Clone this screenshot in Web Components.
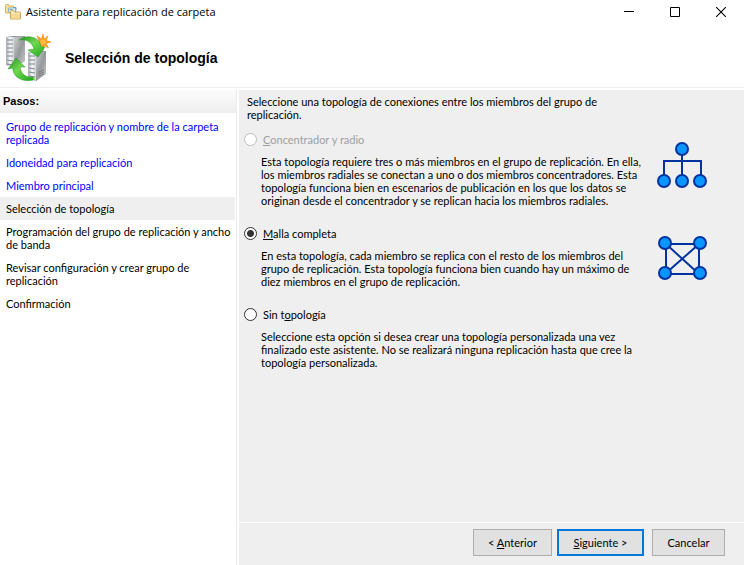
<!DOCTYPE html>
<html lang="es">
<head>
<meta charset="utf-8">
<title>Asistente para replicación de carpeta</title>
<style>
  html, body { height: 100%; }
  body { margin: 0; background: #fff; color: #000; font: 11px/13px Lato, "Liberation Sans", sans-serif; }
</style>
</head>
<body>
<wizard-window>
  <title-bar slot="title">Asistente para replicación de carpeta</title-bar>
  <wizard-header slot="header">Selección de topología</wizard-header>
  <step-list slot="steps" heading="Pasos:">
    <wizard-step state="done">Grupo de replicación y nombre de la carpeta replicada</wizard-step>
    <wizard-step state="done">Idoneidad para replicación</wizard-step>
    <wizard-step state="done">Miembro principal</wizard-step>
    <wizard-step state="current">Selección de topología</wizard-step>
    <wizard-step>Programación del grupo de replicación y ancho de banda</wizard-step>
    <wizard-step>Revisar configuración y crear grupo de replicación</wizard-step>
    <wizard-step>Confirmación</wizard-step>
  </step-list>
  <topology-form></topology-form>
  <wizard-footer slot="footer"></wizard-footer>
</wizard-window>

<script>
const define = (name, html, setup) => customElements.define(name, class extends HTMLElement {
  constructor() {
    super();
    this.attachShadow({ mode: 'open' });
  }
  connectedCallback() {
    this.shadowRoot.innerHTML = '<style>:host,*{box-sizing:border-box}</style>' + html;
    if (setup) setup(this, this.shadowRoot);
  }
});

define('wizard-window', `
<style>
  :host { display: grid; grid-template: auto auto 1fr auto / 239px 1fr; min-height: 100vh; }
  .title, .header { grid-column: 1 / -1; }
  .header { border-bottom: 1px solid #efefef; margin-bottom: 2px; }
  .steps { grid-row: 3 / 5; grid-column: 1; border-right: 1px solid #ebebeb; margin-right: 2px; }
  main { background: #efefef; }
  footer { background: #efefef; border-top: 1px solid #fff; }
</style>
<div class="title"><slot name="title"></slot></div>
<header class="header"><slot name="header"></slot></header>
<nav class="steps"><slot name="steps"></slot></nav>
<main><slot></slot></main>
<footer><slot name="footer"></slot></footer>`);

define('title-bar', `
<style>
  :host { display: flex; align-items: center; height: 24px; padding-left: 5px; font: 11px/16px "Open Sans", sans-serif; }
  .name { flex: 1; padding-left: 5px; white-space: nowrap; }
  button { width: 46px; height: 24px; padding: 0; border: 0; background: none; display: grid; place-items: center; }
  svg { display: block; }
</style>
<svg width="16" height="16" viewBox="0 0 16 16" aria-hidden="true">
  <path d="M.5 9V1.500q0-1 1-1h2l1 1.500h4v7z" fill="#f6df9c" stroke="#d5b264"/>
  <path d="M3.500 8V4h7v4z" fill="#e4f3f8" stroke="#8fb9c9"/>
  <path d="M4.500 5.500h3M8 3.500h3v3" fill="none" stroke="#6aa5bd"/>
  <path d="M5.500 15V7.500q0-1 1-1h2l1 1.500h5q1 0 1 1v6z" fill="#fae7b2" stroke="#cfa853"/>
  <path d="M6 10h9v4.500H6z" fill="#f5d993"/>
</svg>
<span class="name"><slot></slot></span>
<button aria-label="Minimizar"><svg width="10" height="10"><path d="M0 4.500h10" stroke="#000"/></svg></button>
<button aria-label="Maximizar"><svg width="10" height="10"><path d="M.5 .5h9v9h-9z" fill="none" stroke="#000"/></svg></button>
<button aria-label="Cerrar"><svg width="10" height="10"><path d="M0 0l10 10M10 0L0 10" stroke="#000" stroke-width="1.100"/></svg></button>`);

define('wizard-header', `
<style>
  :host { display: flex; align-items: center; gap: 13px; height: 63px; padding: 4px 4px 0; }
  h1 { margin: 0; font: bold 14px/18px "Liberation Sans", Arial, sans-serif; }
  svg { display: block; flex: none; }
</style>
<svg width="48" height="48" viewBox="0 0 48 48" aria-hidden="true">
  <defs>
    <linearGradient id="side" x1="0" y1="0" x2="1" y2="1"><stop offset="0" stop-color="#cfd1d2"/><stop offset=".5" stop-color="#96999b"/><stop offset="1" stop-color="#c9cbcc"/></linearGradient>
    <linearGradient id="front" x1="0" x2="1"><stop offset="0" stop-color="#a4abb0"/><stop offset=".5" stop-color="#f6f7f9"/><stop offset="1" stop-color="#d2d6d8"/></linearGradient>
    <linearGradient id="green" x1="0" y1="0" x2="1" y2="1"><stop offset="0" stop-color="#238c22"/><stop offset=".45" stop-color="#6fd94f"/><stop offset="1" stop-color="#21a51d"/></linearGradient>
  </defs>
  <path d="M2 3l7-1h12v25l-11 6-8-2z" fill="#8b9195"/>
  <path d="M2 3h8v30l-8-2z" fill="url(#front)"/><path d="M10 3l11-1v25l-11 6z" fill="url(#side)"/>
  <path d="M3 6h6M3 10h6M3 14h6M3 18h6M3 22h6M3 26l6 1M3 30l6 1" stroke="#7b858e"/>
  <path d="M24 19l8-2h10v22l-10 8-8-2z" fill="#8b9195"/>
  <path d="M24 18l8 1v28l-8-2z" fill="url(#front)"/><path d="M32 19l10-2v23l-10 7z" fill="url(#side)"/>
  <path d="M25 22h6M25 26h6M25 30h6M25 34l6 1M25 38l6 1M25 42l6 1" stroke="#7b858e"/>
  <path d="M35 38l5-2M35 40l5-2M35 42l5-2" stroke="#777c7f"/>
  <circle cx="30" cy="45" r="1.200" fill="#80e33b"/>
  <path d="M39 0l1 5 4-3-2 4.500 5 1.500-5 1.500 2.500 4.500-4.500-2.500-1 5-1.500-5L33 14l2-4.500L30 8l5-1.500L33 2l4.500 3z" fill="#ffa21d" stroke="#f0860a" stroke-width=".6"/>
  <circle cx="39" cy="8" r="2.600" fill="#ffbd45"/>
  <path d="M15 6C22 0 36 2 37 13h4l-7 10-10-7 6-1C28 8 22 5 15 6z" fill="url(#green)" stroke="#219a20" stroke-width=".5"/>
  <path d="M29 46C18 49 8 42 9 34l-5 1L12 24l9 9h-5c1 7 6 11 13 10z" fill="url(#green)" stroke="#219a20" stroke-width=".5"/>
</svg>
<h1><slot></slot></h1>`);

define('step-list', `
<style>
  :host { display: block; }
  h2 { margin: 0; padding: 5px 3px; height: 23px; font: bold 11px/13px "Liberation Sans", Arial, sans-serif; background: linear-gradient(#fcfcfc, #eeeeee); }
  div { padding-top: 2px; }
</style>
<h2></h2><div role="list"><slot></slot></div>`, (el, root) => {
  root.querySelector('h2').textContent = el.getAttribute('heading');
});

define('wizard-step', `
<style>
  :host { display: block; padding: 5px 2px 5px 6px; margin-right: 1px; }
  :host([state="current"]) { background: #efefef; }
  a { color: #00f; text-decoration: none; }
</style>
<slot></slot>`, (el, root) => {
  el.setAttribute('role', 'listitem');
  if (el.getAttribute('state') === 'done') {
    const link = document.createElement('a');
    link.href = '#';
    root.querySelector('slot').replaceWith(link);
    link.append(document.createElement('slot'));
  }
});

define('topology-form', `
<style>
  :host { display: block; padding: 5px 37px 20px 5px; }
  p { margin: 0; }
  .intro { padding-left: 3px; max-width: 370px; margin-bottom: 12px; }
  form { display: grid; gap: 20px; }
  .option { display: grid; grid-template: 13px auto / 13px minmax(0, 1fr) 50px; column-gap: 6px; row-gap: 9px; }
  input { appearance: none; width: 13px; height: 13px; margin: 0; border: 1px solid #333; border-radius: 50%; background: #fff; }
  input:checked { background: radial-gradient(circle, #333 3px, #fff 4px); }
  input:disabled { border-color: #bcbcbc; }
  input:disabled + label { color: #a0a0a0; }
  .about { grid-column: 1 / 3; grid-row: 2; padding-left: 17px; max-width: 400px; }
  svg { grid-column: 3; grid-row: 1 / 3; margin-top: 8px; margin-bottom: -20px; }
  svg { fill: #0a96ff; stroke: #0033a0; stroke-width: 2; }
</style>
<p class="intro">Seleccione una topología de conexiones entre los miembros del grupo de replicación.</p>
<form>
  <div class="option">
    <input type="radio" name="t" id="hub" disabled><label for="hub"><u>C</u>oncentrador y radio</label>
    <p class="about">Esta topología requiere tres o más miembros en el grupo de replicación. En ella, los miembros radiales se conectan a uno o dos miembros concentradores. Esta topología funciona bien en escenarios de publicación en los que los datos se originan desde el concentrador y se replican hacia los miembros radiales.</p>
    <svg width="50" height="48" viewBox="0 0 50 48" aria-hidden="true">
      <path d="M25 8v32M7 40V20h37v20" fill="none"/>
      <circle cx="25" cy="8" r="6"/><circle cx="7" cy="40" r="6"/><circle cx="25" cy="40" r="6"/><circle cx="43" cy="40" r="6"/>
    </svg>
  </div>
  <div class="option">
    <input type="radio" name="t" id="mesh" checked><label for="mesh"><u>M</u>alla completa</label>
    <p class="about">En esta topología, cada miembro se replica con el resto de los miembros del grupo de replicación. Esta topología funciona bien cuando hay un máximo de diez miembros en el grupo de replicación.</p>
    <svg width="50" height="46" viewBox="0 0 50 46" aria-hidden="true">
      <path d="M8 9h34v30H9V9l33 30M42 9L8 39" fill="none"/>
      <circle cx="8" cy="8" r="6"/><circle cx="43" cy="8" r="6"/><circle cx="8" cy="38" r="6"/><circle cx="43" cy="38" r="6"/>
    </svg>
  </div>
  <div class="option">
    <input type="radio" name="t" id="none"><label for="none">Sin t<u>o</u>pología</label>
    <p class="about">Seleccione esta opción si desea crear una topología personalizada una vez finalizado este asistente. No se realizará ninguna replicación hasta que cree la topología personalizada.</p>
  </div>
</form>`);

define('wizard-footer', `
<style>
  :host { display: flex; justify-content: flex-end; gap: 5px; padding: 6px 19px 9px; }
  button { height: 27px; min-width: 79px; padding: 0 8px; border: 1px solid #adadad; background: #e1e1e1; color: #000; font: inherit; }
  .next { min-width: 87px; border: 2px solid #0078d7; }
  .cancel { min-width: 73px; margin-left: 3px; }
</style>
<button>&lt; <u>A</u>nterior</button>
<button class="next"><u>S</u>iguiente &gt;</button>
<button class="cancel">Cancelar</button>`);
</script>
</body>
</html>
